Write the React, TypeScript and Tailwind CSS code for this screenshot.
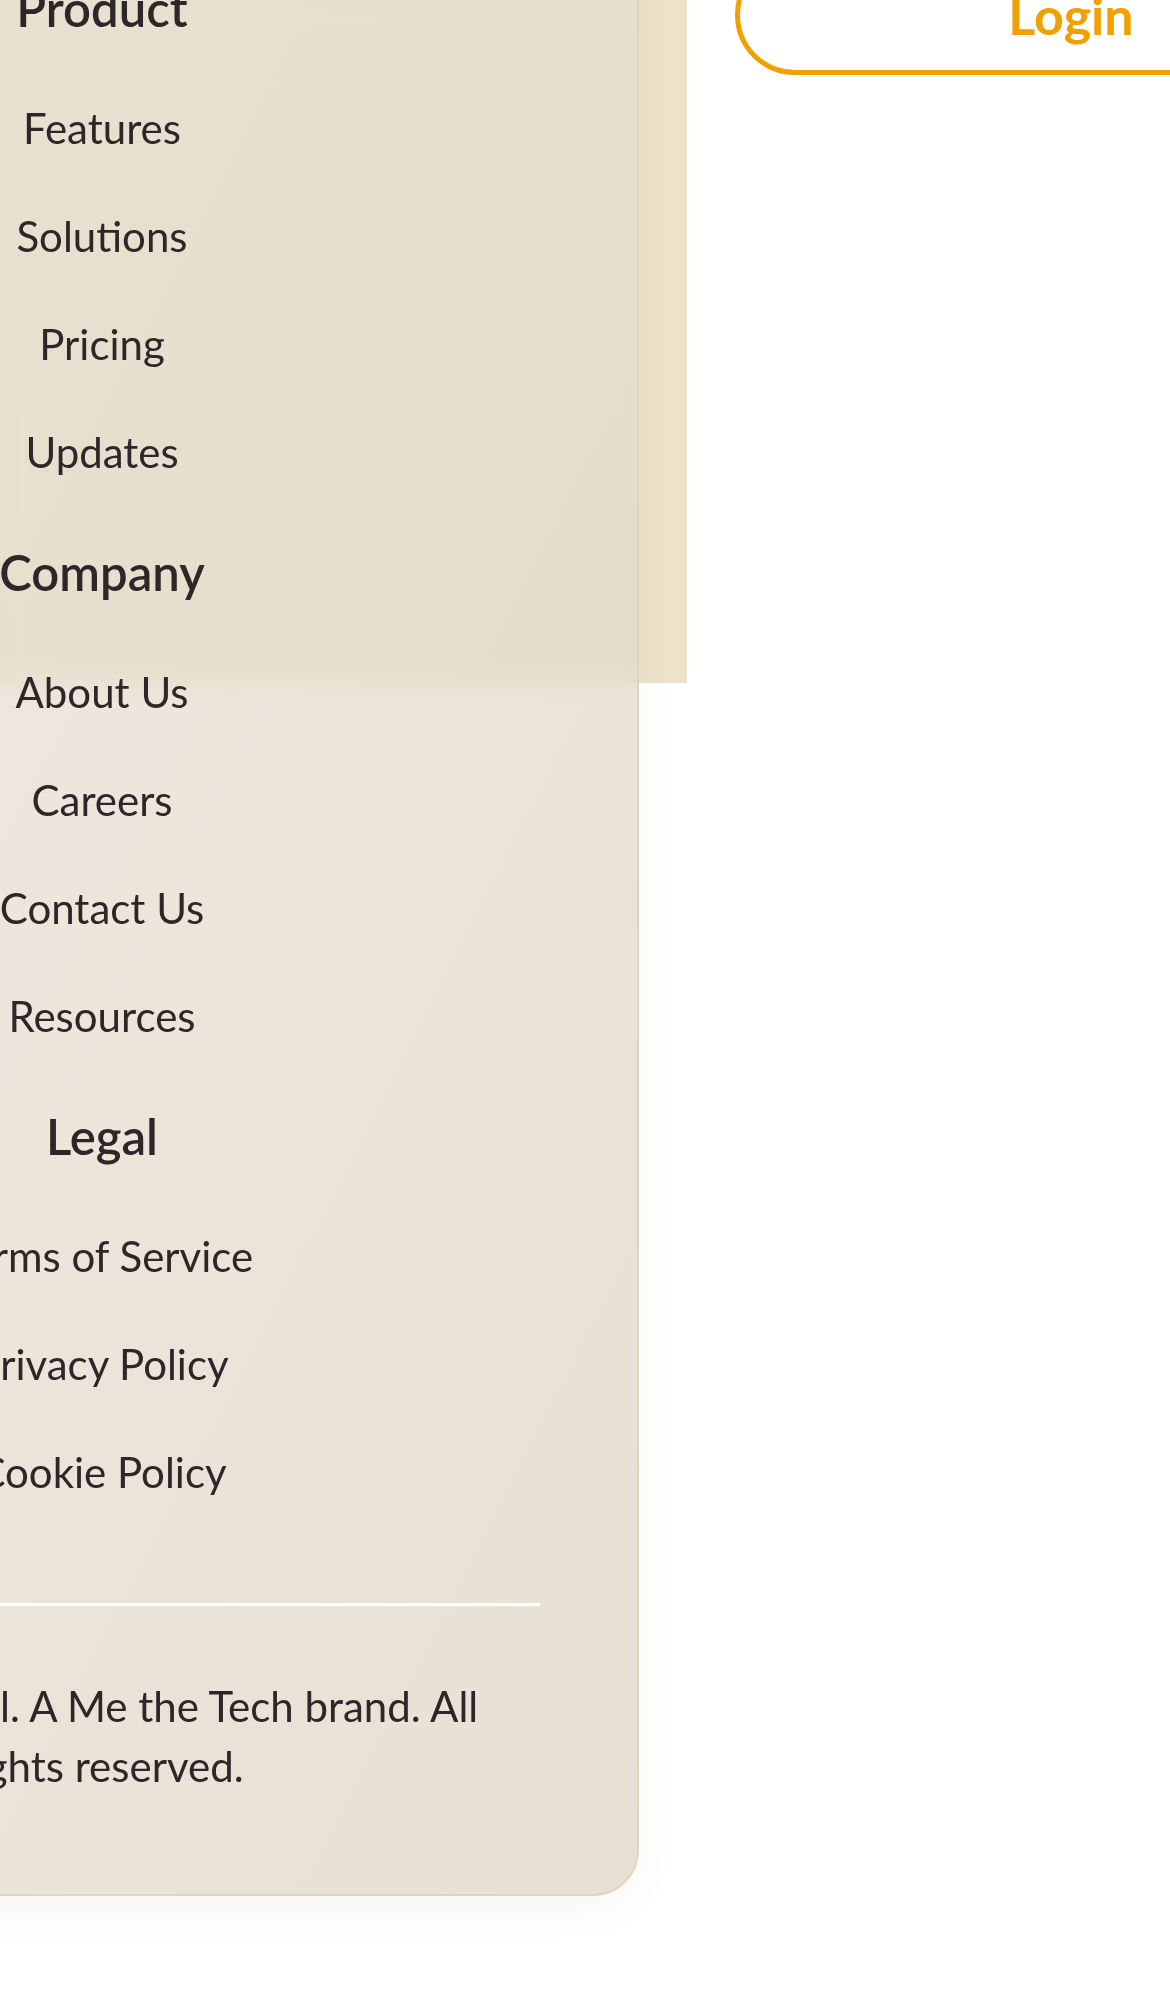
import React from "react";

const sections = [
  { title: "Product", links: ["Features", "Solutions", "Pricing", "Updates"] },
  { title: "Company", links: ["About Us", "Careers", "Contact Us", "Resources"] },
  { title: "Legal", links: ["Terms of Service", "Privacy Policy", "Cookie Policy"] },
];

export default function App() {
  return (
    <div
      className="relative w-[1170px] h-[1992px] overflow-hidden bg-white text-[#2e2729]"
      style={{ fontFamily: "Lato, 'Noto Sans', sans-serif" }}
    >
      <div className="absolute left-0 top-0 w-[687px] h-[683px] bg-[#ede3ca]" />
      <div className="relative z-10 flex items-start">
        <footer className="shrink-0 ml-[-400px] mt-[-120px] w-[1039px] rounded-[46px] border-2 border-[#dfd4bf] bg-gradient-to-br from-[rgba(234,228,216,0.72)] to-[rgba(222,212,194,0.72)] backdrop-blur-md shadow-[0_12px_40px_rgba(120,100,60,0.06)] pt-[96px] pb-[98px] pl-[62px] pr-[97px]">
          <div className="w-[876px]">
            <div className="flex flex-col gap-[60px] text-center">
              {sections.map((s) => (
                <div key={s.title}>
                  <h3 className="h-[60px] leading-[60px] text-[49px] font-semibold">{s.title}</h3>
                  <ul className="mt-[60px] flex flex-col gap-[48px]">
                    {s.links.map((l) => (
                      <li key={l} className="h-[60px] leading-[60px] text-[42px] whitespace-nowrap">
                        {l}
                      </li>
                    ))}
                  </ul>
                </div>
              ))}
            </div>
            <div className="mt-[101px] h-[3px] bg-white" />
            <p className="mt-[70px] text-center text-[42px] leading-[60px] whitespace-nowrap">
              © 2024 Cordial. A Me the Tech brand. All
              <br />
              rights reserved.
            </p>
          </div>
        </footer>
        <button className="shrink-0 ml-[96px] mt-[-45px] w-[672px] h-[120px] rounded-full border-[5px] border-[#f0a000] text-[#f0a000] text-[52px] font-bold leading-none bg-white">
          Login
        </button>
      </div>
    </div>
  );
}
